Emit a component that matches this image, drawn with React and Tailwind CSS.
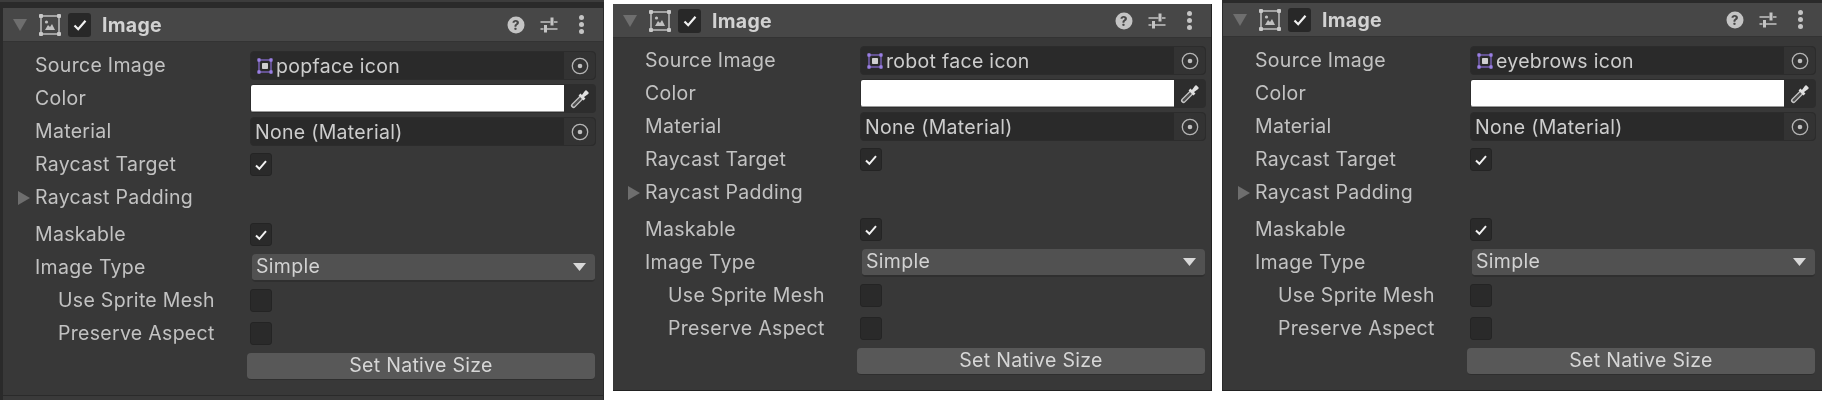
function HandleBox({ color, children }) {
  return (
    <svg width="24" height="24" viewBox="0 0 24 24" fill="none">
      <rect x="3" y="3" width="18" height="18" stroke={color} strokeWidth="1.4" />
      {[[3, 3], [21, 3], [3, 21], [21, 21]].map(([x, y]) => (
        <rect key={`${x}-${y}`} x={x - 2} y={y - 2} width="4" height="4" rx="1" fill={color} />
      ))}
      {children}
    </svg>
  );
}

function Check() {
  return (
    <svg width="22" height="22" viewBox="0 0 22 22" fill="none">
      <path d="M5.5 11.5l3.7 3.7 7.3-8.4" stroke="#f2f2f2" strokeWidth="2.2" />
    </svg>
  );
}

function Checkbox({ checked }) {
  return (
    <div className="flex h-[23px] w-[22px] items-center justify-center rounded-[3px] border border-[#242424] bg-[#2a2a2a]">
      {checked && <Check />}
    </div>
  );
}

function TargetIcon() {
  return (
    <svg width="18" height="18" viewBox="0 0 18 18" fill="none">
      <circle cx="9" cy="9" r="7.7" stroke="#b4b4b4" strokeWidth="1.3" />
      <circle cx="9" cy="9" r="2.300" fill="#c0c0c0" />
    </svg>
  );
}

function Dropper() {
  return (
    <svg width="20" height="20" viewBox="0 0 20 20" fill="none">
      <path d="M3.500 16.500L11 9" stroke="#c4c4c4" strokeWidth="5" strokeLinecap="round" />
      <path d="M3.700 16.300L11 9" stroke="#4e4e4e" strokeWidth="2.400" strokeLinecap="round" />
      <path d="M9.500 5.500l5 5" stroke="#e0e0e0" strokeWidth="2.600" />
      <path d="M12 8l4-5.500 1.500 1.500z" fill="#e0e0e0" stroke="#e0e0e0" strokeWidth="2.400" strokeLinejoin="round" />
    </svg>
  );
}

function HeaderIcons() {
  return (
    <div className="ml-auto mr-[19px] flex items-center">
      <svg width="18" height="18" viewBox="0 0 18 18">
        <circle cx="9" cy="9" r="8.5" fill="#c4c4c4" />
        <text x="9" y="13.6" textAnchor="middle" fontSize="13" fontWeight="800" fill="#474747" fontFamily="Inter, sans-serif">?</text>
      </svg>
      <svg className="ml-[15px]" width="18" height="18" viewBox="0 0 18 18" fill="none">
        <path d="M0.5 6h10M14 6h3.5M0.5 13h3M7 13h10.500" stroke="#c4c4c4" strokeWidth="1.5" />
        <path d="M12 1.500v8M5.500 9v7.500" stroke="#c4c4c4" strokeWidth="3" />
      </svg>
      <div className="ml-[21px] flex w-[5px] flex-col gap-[2px]">
        <div className="h-[5px] w-[5px] rounded-full bg-[#c4c4c4]" />
        <div className="h-[5px] w-[5px] rounded-full bg-[#c4c4c4]" />
        <div className="h-[5px] w-[5px] rounded-full bg-[#c4c4c4]" />
      </div>
    </div>
  );
}

function Row({ label, indent, className = '', children }) {
  return (
    <div className={`flex h-[33px] items-center ${className}`}>
      <div className={`w-[215px] shrink-0 ${indent ? 'pl-[23px]' : ''}`}>{label}</div>
      {children}
    </div>
  );
}

function ObjectField({ icon, text }) {
  return (
    <div className="flex h-[29px] w-[346px] shrink-0 items-center rounded-[4px] border border-[#2c2c2c] bg-[#2a2a2a]">
      {icon && (
        <div className="ml-[5px] mr-[2px] flex h-[18px] w-[18px] items-center justify-center">
          <svg width="18" height="18" viewBox="0 0 24 24" fill="none">
            <rect x="4" y="4" width="16" height="16" stroke="#8b6fd6" strokeWidth="1.6" />
            {[[4, 4], [20, 4], [4, 20], [20, 20]].map(([x, y]) => (
              <rect key={`${x}-${y}`} x={x - 2.200} y={y - 2.200} width="4.400" height="4.400" rx="1" fill="#9a7fe4" />
            ))}
            <rect x="8" y="8" width="8" height="8" rx="1" fill="#cfcfcf" />
          </svg>
        </div>
      )}
      <span className={`pt-[2px] text-[#cdcdcd] ${icon ? '' : 'ml-[4px]'}`}>{text}</span>
      <div className="ml-auto flex h-full w-[31px] items-center justify-center rounded-r-[4px] bg-[#333333]">
        <TargetIcon />
      </div>
    </div>
  );
}

function Panel({ source, className, bodyClass = 'pt-[7px]' }) {
  return (
    <div className={`flex flex-col bg-[#383838] ${className}`}>
      <div className="flex h-[34px] shrink-0 items-center border-b border-[#333333] bg-[#474747]">
        <svg className="ml-[10px]" width="14" height="12" viewBox="0 0 14 12">
          <path d="M0 0h14L7 12z" fill="#6e6e6e" />
        </svg>
        <div className="ml-[11px]">
          <HandleBox color="#c8c8c8">
            <path d="M7 17l3-5 2 2 2-3 3 6z" fill="#c0c0c0" />
            <circle cx="8.500" cy="9" r="1.600" fill="#c0c0c0" />
          </HandleBox>
        </div>
        <div className="ml-[6px] flex h-[24px] w-[23px] items-center justify-center rounded-[3px] bg-[#282828]">
          <Check />
        </div>
        <span className="ml-[11px] pt-[2px] font-bold text-[#d2d2d2]">Image</span>
        <HeaderIcons />
      </div>

      <div className={`flex flex-col pl-[32px] ${bodyClass}`}>
        <Row label="Source Image"><ObjectField icon text={source} /></Row>
        <Row label="Color">
          <div className="flex h-[29px] w-[346px] shrink-0 items-center rounded-[4px] bg-[#2d2d2d] pl-px">
            <div className="h-[27px] w-[313px] rounded-l-[2px] border-b border-[#9a9a9a] bg-white" />
            <div className="flex flex-1 items-center justify-center"><Dropper /></div>
          </div>
        </Row>
        <Row label="Material"><ObjectField text="None (Material)" /></Row>
        <Row label="Raycast Target"><Checkbox checked /></Row>
        <div className="relative">
          <svg className="absolute left-[-17px] top-[10px]" width="12" height="14" viewBox="0 0 12 14">
            <path d="M0 0l12 7L0 14z" fill="#6e6e6e" />
          </svg>
          <Row label="Raycast Padding" />
        </div>
        <Row label="Maskable" className="mt-[4px]"><Checkbox checked /></Row>
        <Row label="Image Type">
          <div className="ml-[2px] flex h-[28px] w-[343px] shrink-0 items-center rounded-[4px] border-b-2 border-[#2f2f2f] bg-[#515151] pl-[4px] pr-[9px] text-[#d2d2d2]">
            Simple
            <svg className="ml-auto" width="13" height="8" viewBox="0 0 13 8">
              <path d="M0 0h13L6.500 8z" fill="#d8d8d8" />
            </svg>
          </div>
        </Row>
        <Row label="Use Sprite Mesh" indent><Checkbox /></Row>
        <Row label="Preserve Aspect" indent><Checkbox /></Row>
        <div className="flex h-[33px] items-center pl-[212px]">
          <div className="flex h-[27px] w-[348px] shrink-0 items-center justify-center rounded-[4px] border-b border-[#2e2e2e] bg-[#585858] text-[#d6d6d6]">
            Set Native Size
          </div>
        </div>
      </div>
    </div>
  );
}

export default function App() {
  return (
    <div className="flex h-[400px] w-[1822px] items-start overflow-hidden bg-white font-['Inter',sans-serif] text-[19.5px] leading-none tracking-[0.3px] text-[#c2c2c2] blur-[0.4px]">
      <div className="flex h-[400px] w-[604px] shrink-0 flex-col border-t-2 border-[#3c3c3c] bg-[#2a2a2a] pl-[3px] pr-px pt-[6px]">
        <Panel source="popface icon" className="h-[387px]" />
        <div className="mt-[1px] flex-1 bg-[#3a3a3a]" />
      </div>
      <div className="ml-[9px] mt-[4px] border-b border-r border-[#222222]">
        <Panel source="robot face icon" className="h-[386px] w-[598px]" bodyClass="pt-[6px]" />
      </div>
      <div className="ml-[10px] flex h-[391px] flex-1 flex-col border-b border-[#222222] bg-[#2a2a2a] pl-px pt-[3px]">
        <Panel source="eyebrows icon" className="flex-1" />
      </div>
    </div>
  );
}
